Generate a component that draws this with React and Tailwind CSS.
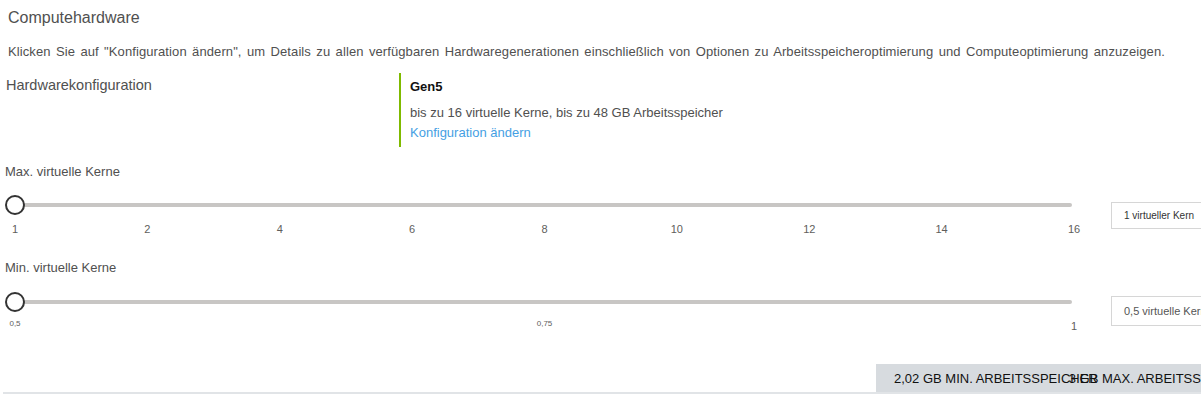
const FONT = { fontFamily: '"Liberation Sans", Arial, sans-serif' }

function Slider({ ticks, tickClass }) {
  return (
    <div className="w-[1086px] shrink-0">
      <div className="relative h-[20px]">
        <div className="absolute left-[15px] right-[14px] top-[8px] h-[4px] rounded-full bg-[#c8c6c4]" />
        <div className="absolute left-[5px] top-0 h-[20px] w-[20px] rounded-full border-2 border-[#333] bg-white" />
      </div>
      <div className="mt-[6px] flex justify-between pl-[3px]">
        {ticks.map((t, i) => (
          <span key={i} className={`w-6 text-center text-[#605e5c] ${tickClass(i)}`}>
            {t}
          </span>
        ))}
      </div>
    </div>
  )
}

export default function App() {
  return (
    <div className="h-[394px] w-[1201px] overflow-hidden bg-white" style={FONT}>
      <div className="pl-[8px] pt-[6px] text-[16px] text-[#505050]">Computehardware</div>
      <p className="ml-[8px] mt-[12px] w-[1157px] text-[13px] tracking-[0.1px] text-[#505050] [text-align-last:justify]">
        Klicken Sie auf "Konfiguration ändern", um Details zu allen verfügbaren Hardwaregenerationen einschließlich von Optionen zu Arbeitsspeicheroptimierung und Computeoptimierung anzuzeigen.
      </p>

      <div className="mt-[11px] flex">
        <div className="w-[399px] pl-[6px] pt-[2px] text-[14.5px] text-[#505050]">Hardwarekonfiguration</div>
        <div className="h-[74px] border-l-[2px] border-[#7fba00] pl-[9px] pt-[4px] text-[13px]">
          <div className="font-bold text-[#111]">Gen5</div>
          <div className="mt-[7px] text-[#505050]">bis zu 16 virtuelle Kerne, bis zu 48 GB Arbeitsspeicher</div>
          <div className="mt-[0px] text-[#45a0e3]">Konfiguration ändern</div>
        </div>
      </div>

      <div className="mt-[15px] pl-[5px] text-[13px] text-[#505050]">Max. virtuelle Kerne</div>
      <div className="mt-[14px] flex items-start">
        <Slider
          ticks={['1', '2', '4', '6', '8', '10', '12', '14', '16']}
          tickClass={() => 'text-[11px]'}
        />
        <div className="ml-[25px] mt-[7px] flex h-[27px] w-[110px] shrink-0 items-center border border-[#d6d6d6] pl-[12px] text-[10px] text-[#333]">
          1 virtueller Kern
        </div>
      </div>

      <div className="mt-[20px] pl-[5px] text-[13px] text-[#505050]">Min. virtuelle Kerne</div>
      <div className="mt-[15px] flex items-start">
        <Slider
          ticks={['0,5', '0,75', '1']}
          tickClass={(i) => (i === 2 ? 'text-[11px]' : 'text-[8px]')}
        />
        <div className="ml-[25px] mt-[4px] flex h-[30px] w-[110px] shrink-0 items-center border border-[#d6d6d6] pl-[12px] text-[11px] text-[#555]">
          0,5 virtuelle Kern
        </div>
      </div>

      <div className="mt-[29px] flex flex-col">
        <div className="ml-[876px] flex h-[28px] items-center whitespace-nowrap bg-[#d7dbdf] pl-[18px] pt-[2px] text-[13px] text-[#111]">
          <span>2,02 GB MIN. ARBEITSSPEICHER</span>
          <span className="ml-[-29px]">3 GB MAX. ARBEITSSPEICHER</span>
        </div>
        <div className="ml-[3px] h-[2px] bg-[#e1e4e7]" />
      </div>
    </div>
  )
}
